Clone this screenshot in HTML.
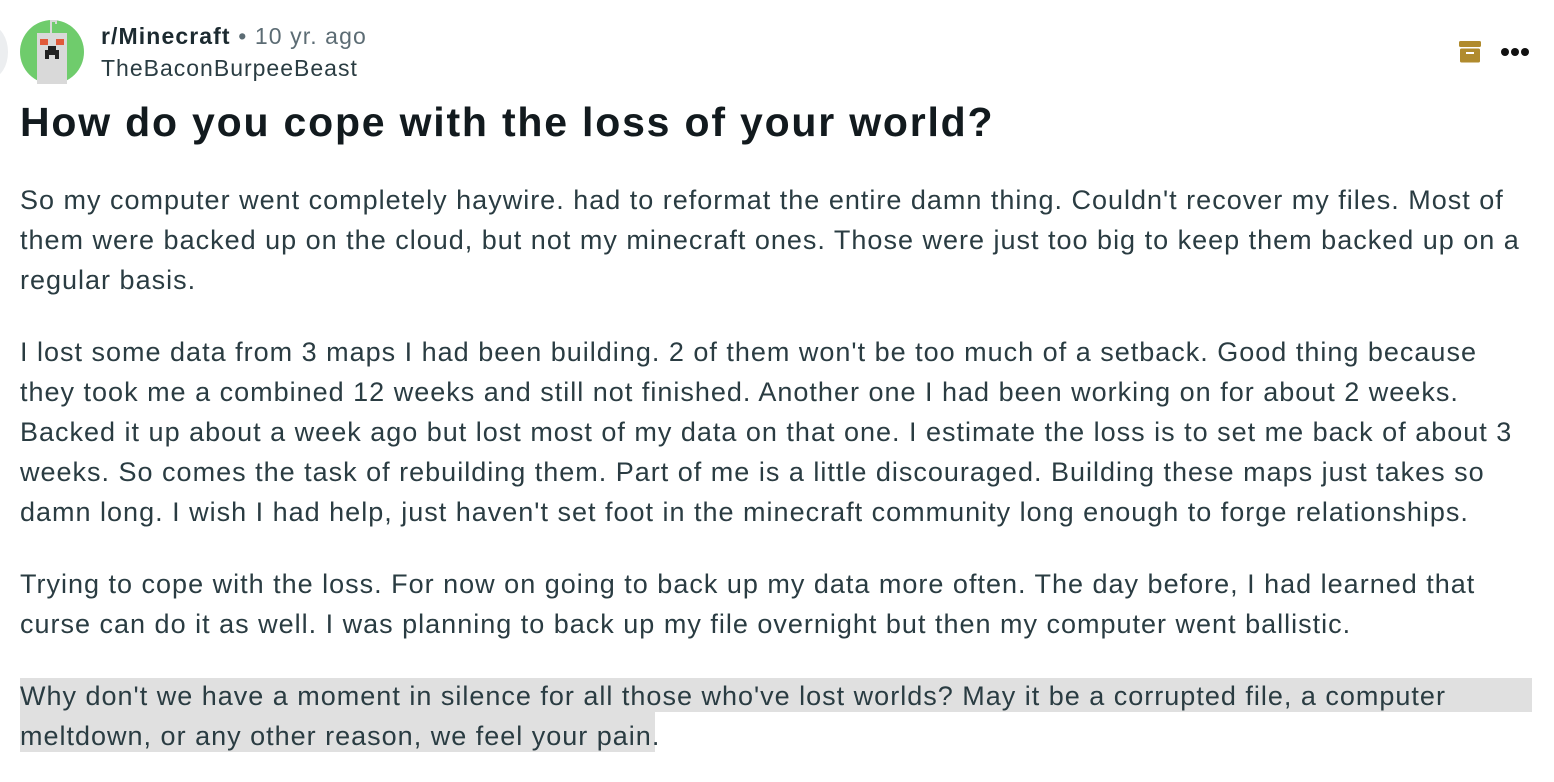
<!DOCTYPE html><html><head><style>
body{margin:0;width:1554px;height:782px;background:#fff;font-family:"Liberation Sans",Arial,sans-serif;color:#1c1c1c;position:relative;overflow:hidden}
.p{position:absolute;left:20px;font-size:27px;line-height:40px;color:#2a3c42;margin:0;white-space:nowrap;letter-spacing:1px}
</style></head><body>
<div style="position:absolute;left:-26px;top:26px;width:34px;height:52px;border-radius:50%;background:#eceef0"></div>
<svg style="position:absolute;left:20px;top:20px" width="64" height="64" viewBox="0 0 64 64">
<circle cx="32" cy="32" r="32" fill="#6fcc6c"/>
<rect x="17" y="13" width="30" height="51" fill="#d9d9d9"/>
<rect x="30" y="0" width="2" height="13" fill="#d9d9d9"/><rect x="30" y="0" width="7" height="2" fill="#d9d9d9"/><rect x="35" y="0" width="2" height="4" fill="#d9d9d9"/>
<rect x="20" y="19" width="8" height="6" fill="#e05a3a"/><rect x="36" y="19" width="8" height="6" fill="#e05a3a"/>
<rect x="28" y="26" width="8" height="4" fill="#222"/><rect x="25" y="30" width="14" height="5" fill="#222"/><rect x="25" y="35" width="4" height="4" fill="#222"/><rect x="35" y="35" width="4" height="4" fill="#222"/>
</svg>
<div style="position:absolute;left:101px;top:22px;font-size:23px;line-height:28px;letter-spacing:1.1px"><b style="color:#1c2a30">r/Minecraft</b> <span style="color:#5c6c74">• 10 yr. ago</span></div>
<div style="position:absolute;left:101px;top:54px;font-size:23px;line-height:28px;color:#2a3c42;letter-spacing:1px">TheBaconBurpeeBeast</div>
<svg style="position:absolute;left:1459px;top:41px" width="22" height="22" viewBox="0 0 22 22"><rect x="0" y="0" width="22" height="6" rx="1.5" fill="#b08b2e"/><rect x="1" y="7.5" width="20" height="14" rx="1.5" fill="#b08b2e"/><rect x="7" y="11" width="8" height="2" fill="#fff"/></svg>
<svg style="position:absolute;left:1500px;top:46px" width="30" height="12"><circle cx="5" cy="6" r="4" fill="#111"/><circle cx="15" cy="6" r="4" fill="#111"/><circle cx="25" cy="6" r="4" fill="#111"/></svg>
<div style="position:absolute;left:20px;top:96px;font-size:41px;line-height:52px;font-weight:bold;color:#121a1e;letter-spacing:1.8px;white-space:nowrap">How do you cope with the loss of your world?</div>
<p class="p" style="top:180px">So my computer went completely haywire. had to reformat the entire damn thing. Couldn't recover my files. Most of<br>them were backed up on the cloud, but not my minecraft ones. Those were just too big to keep them backed up on a<br>regular basis.</p>
<p class="p" style="top:332px">I lost some data from 3 maps I had been building. 2 of them won't be too much of a setback. Good thing because<br>they took me a combined 12 weeks and still not finished. Another one I had been working on for about 2 weeks.<br>Backed it up about a week ago but lost most of my data on that one. I estimate the loss is to set me back of about 3<br>weeks. So comes the task of rebuilding them. Part of me is a little discouraged. Building these maps just takes so<br>damn long. I wish I had help, just haven't set foot in the minecraft community long enough to forge relationships.</p>
<p class="p" style="top:564px">Trying to cope with the loss. For now on going to back up my data more often. The day before, I had learned that<br>curse can do it as well. I was planning to back up my file overnight but then my computer went ballistic.</p>
<div style="position:absolute;left:20px;top:678px;width:1512px;height:34px;background:#e0e0e0"></div>
<div style="position:absolute;left:20px;top:712px;width:635px;height:40px;background:#e0e0e0"></div>
<p class="p" style="top:676px">Why don't we have a moment in silence for all those who've lost worlds? May it be a corrupted file, a computer<br>meltdown, or any other reason, we feel your pain.</p>
</body></html>
